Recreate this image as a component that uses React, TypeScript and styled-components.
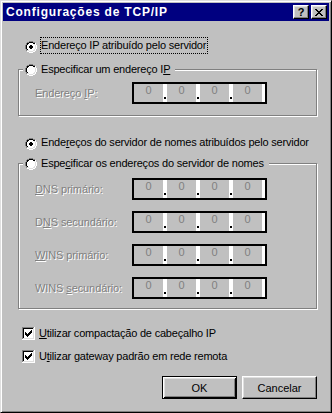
import React from 'react';
import styled, {createGlobalStyle} from 'styled-components';

const GlobalStyle = createGlobalStyle`
  html, body {
    margin: 0;
    padding: 0;
    background: #c0c0c0;
  }
  body {
    font-family: "Liberation Sans", Arial, sans-serif;
    font-size: 11px;
    color: #000;
  }
`;

// pixel colours used by the small bitmaps (radio, checkbox, close glyph)
const palette: Record<string, string> = {
    G: '#808080',
    K: '#000000',
    W: '#ffffff',
    L: '#dfdfdf',
};

const radioBase = [
    '....GGGG....',
    '..GGKKKKGG..',
    '.GKKWWWWKKW.',
    '.GKWWWWWWLW.',
    'GKWWWWWWWWLW',
    'GKWWWWWWWWLW',
    'GKWWWWWWWWLW',
    'GKWWWWWWWWLW',
    '.GKWWWWWWLW.',
    '.GLLWWWWLLW.',
    '..WWLLLLWW..',
    '....WWWW....',
];

const radioDot: Record<number, number[]> = {4: [5, 6], 5: [4, 5, 6, 7], 6: [4, 5, 6, 7], 7: [5, 6]};

const radioRows = (checked: boolean) =>
    radioBase.map((row, y) =>
        row.split('').map((c, x) => (checked && radioDot[y]?.includes(x) ? 'K' : c)).join('')
    );

const checkboxRows = (() => {
    const rows: string[][] = [];
    for (let y = 0; y < 13; y++) {
        const r: string[] = [];
        for (let x = 0; x < 13; x++) {
            let c = 'W';
            if (x === 12 || y === 12) c = 'W';
            else if (x === 0 || y === 0) c = 'G';
            else if (x === 11 || y === 11) c = 'L';
            else if (x === 1 || y === 1) c = 'K';
            r.push(c);
        }
        rows.push(r);
    }
    const mark = ['......K', '.....KK', 'K...KKK', 'KK.KKK.', 'KKKKK..', '.KKK...', '..K....'];
    mark.forEach((m, y) => m.split('').forEach((c, x) => {
        if (c === 'K') rows[y + 3][x + 3] = 'K';
    }));
    return rows.map(r => r.join(''));
})();

const closeGlyph = [
    'KK....KK',
    '.KK..KK.',
    '..KKKK..',
    '...KK...',
    '..KKKK..',
    '.KK..KK.',
    'KK....KK',
];

const PixelSvg = styled.svg<{ $mt?: number }>`
  display: block;
  flex: none;
  margin-top: ${p => p.$mt ?? 0}px;
`;

const Pixels = ({rows, mt}: { rows: string[]; mt?: number }) => (
    <PixelSvg width={rows[0].length} height={rows.length} shapeRendering="crispEdges" $mt={mt}>
        {rows.flatMap((r, y) =>
            r.split('').map((c, x) =>
                palette[c] ? <rect key={x + '-' + y} x={x} y={y} width={1} height={1} fill={palette[c]}/> : null
            )
        )}
    </PixelSvg>
);

const Window = styled.div`
  width: 332px;
  height: 413px;
  box-sizing: border-box;
  background: #c0c0c0;
  border: 1px solid;
  border-color: #dfdfdf #000 #000 #dfdfdf;
  box-shadow: inset 1px 1px 0 #fff, inset -1px -1px 0 #808080;
  padding: 2px;
  display: flex;
  flex-direction: column;
`;

const TitleBar = styled.div`
  height: 18px;
  flex: none;
  background: #000080;
  display: flex;
  align-items: center;
  padding: 0 2px 0 3px;
`;

const Title = styled.div`
  flex: 1;
  color: #fff;
  font-weight: bold;
  font-size: 12px;
  letter-spacing: 0.8px;
  white-space: nowrap;
`;

const CaptionButtons = styled.div`
  display: flex;
  gap: 2px;
`;

const CaptionButton = styled.div`
  width: 16px;
  height: 14px;
  box-sizing: border-box;
  background: #c0c0c0;
  border: 1px solid;
  border-color: #fff #000 #000 #fff;
  box-shadow: inset -1px -1px 0 #808080, inset 1px 1px 0 #dfdfdf;
  display: flex;
  align-items: center;
  justify-content: center;
`;

const HelpGlyph = styled.span`
  font-weight: bold;
  font-size: 11px;
  line-height: 11px;
  color: #000;
`;

const Body = styled.div`
  flex: 1;
  display: flex;
  flex-direction: column;
  padding: 16px 12px 0 15px;
`;

const OptionRow = styled.div<{ $indent: number; $mt?: number }>`
  display: flex;
  align-items: center;
  gap: 3px;
  height: 17px;
  padding-left: ${p => p.$indent}px;
  margin-top: ${p => p.$mt ?? 0}px;
`;

const Label = styled.span<{ $focus?: boolean }>`
  line-height: 15px;
  letter-spacing: -0.2px;
  padding: 0 1px 0 0;
  border: 1px ${p => (p.$focus ? 'dotted #000' : 'solid transparent')};
  white-space: nowrap;

  u {
    text-underline-offset: 1px;
  }
`;

const Group = styled.div<{ $mt: number; $pt: number; $pb: number }>`
  position: relative;
  margin-top: ${p => p.$mt}px;
  border: 1px solid #808080;
  box-shadow: inset 1px 1px 0 #fff, 1px 1px 0 #fff;
  padding: ${p => p.$pt}px 0 ${p => p.$pb}px 16px;
  display: flex;
  flex-direction: column;
  gap: 11px;
`;

const Legend = styled.div`
  position: absolute;
  top: -9px;
  left: 4px;
  display: flex;
  align-items: center;
  gap: 3px;
  height: 17px;
  padding: 0 3px 0 2px;
  background: #c0c0c0;
`;

const FieldRow = styled.div`
  display: flex;
  align-items: center;
  height: 22px;
`;

const FieldLabel = styled.span`
  width: 97px;
  flex: none;
  color: #808080;
  text-shadow: 1px 1px 0 #fff;
  letter-spacing: -0.1px;
  white-space: nowrap;

  u {
    text-underline-offset: 1px;
  }
`;

const IpBox = styled.div`
  width: 135px;
  height: 22px;
  box-sizing: border-box;
  border: 2px solid #000;
  background: #fff;
  display: flex;
`;

const Octet = styled.div`
  width: 29px;
  height: 18px;
  background: #c0c0c0;
  color: #808080;
  text-align: center;
  line-height: 13px;
`;

const Separator = styled.div`
  width: 4px;
  height: 18px;
  display: flex;
  align-items: flex-end;
  justify-content: center;
  padding-bottom: 3px;
  box-sizing: border-box;

  &::after {
    content: '';
    width: 2px;
    height: 2px;
    background: #000;
  }
`;

const ButtonRow = styled.div`
  display: flex;
  justify-content: flex-end;
  gap: 5px;
  margin-top: 11px;
`;

const Button = styled.button<{ $default?: boolean }>`
  width: 75px;
  height: 23px;
  box-sizing: border-box;
  font-family: "Liberation Sans", Arial, sans-serif;
  font-size: 11px;
  color: #000;
  background: #c0c0c0;
  padding: 0;
  border: 1px solid;
  border-color: ${p => (p.$default ? '#000' : '#fff #000 #000 #fff')};
  box-shadow: ${p => (p.$default
          ? 'inset 1px 1px 0 #fff, inset -1px -1px 0 #000, inset 2px 2px 0 #dfdfdf, inset -2px -2px 0 #808080'
          : 'inset -1px -1px 0 #808080, inset 1px 1px 0 #dfdfdf')};
`;

const IpField = ({label}: { label: React.ReactNode }) => (
    <FieldRow>
        <FieldLabel>{label}</FieldLabel>
        <IpBox>
            <Octet>0</Octet>
            <Separator/>
            <Octet>0</Octet>
            <Separator/>
            <Octet>0</Octet>
            <Separator/>
            <Octet>0</Octet>
        </IpBox>
    </FieldRow>
);

export default function App() {
    return (
        <>
            <GlobalStyle/>
            <Window>
                <TitleBar>
                    <Title>Configurações de TCP/IP</Title>
                    <CaptionButtons>
                        <CaptionButton><HelpGlyph>?</HelpGlyph></CaptionButton>
                        <CaptionButton><Pixels rows={closeGlyph}/></CaptionButton>
                    </CaptionButtons>
                </TitleBar>
                <Body>
                    <OptionRow $indent={7}>
                        <Pixels rows={radioRows(true)} mt={2}/>
                        <Label $focus>Endereço IP atribuído pelo servidor</Label>
                    </OptionRow>

                    <Group $mt={15} $pt={12} $pb={11}>
                        <Legend>
                            <Pixels rows={radioRows(false)}/>
                            <Label>Especificar um endereço I<u>P</u></Label>
                        </Legend>
                        <IpField label={<>Endereço <u>I</u>P:</>}/>
                    </Group>

                    <OptionRow $indent={7} $mt={18}>
                        <Pixels rows={radioRows(true)} mt={2}/>
                        <Label>Ende<u>r</u>eços do servidor de nomes atribuídos pelo servidor</Label>
                    </OptionRow>

                    <Group $mt={12} $pt={14} $pb={9}>
                        <Legend>
                            <Pixels rows={radioRows(false)}/>
                            <Label>Espe<u>c</u>ificar os endereços do servidor de nomes</Label>
                        </Legend>
                        <IpField label={<><u>D</u>NS primário:</>}/>
                        <IpField label={<>D<u>N</u>S secundário:</>}/>
                        <IpField label={<><u>W</u>INS primário:</>}/>
                        <IpField label={<>WINS <u>s</u>ecundário:</>}/>
                    </Group>

                    <OptionRow $indent={4} $mt={16}>
                        <Pixels rows={checkboxRows}/>
                        <Label><u>U</u>tilizar compactação de cabeçalho IP</Label>
                    </OptionRow>
                    <OptionRow $indent={4} $mt={6}>
                        <Pixels rows={checkboxRows}/>
                        <Label>U<u>t</u>ilizar gateway padrão em rede remota</Label>
                    </OptionRow>

                    <ButtonRow>
                        <Button $default>OK</Button>
                        <Button>Cancelar</Button>
                    </ButtonRow>
                </Body>
            </Window>
        </>
    );
}
